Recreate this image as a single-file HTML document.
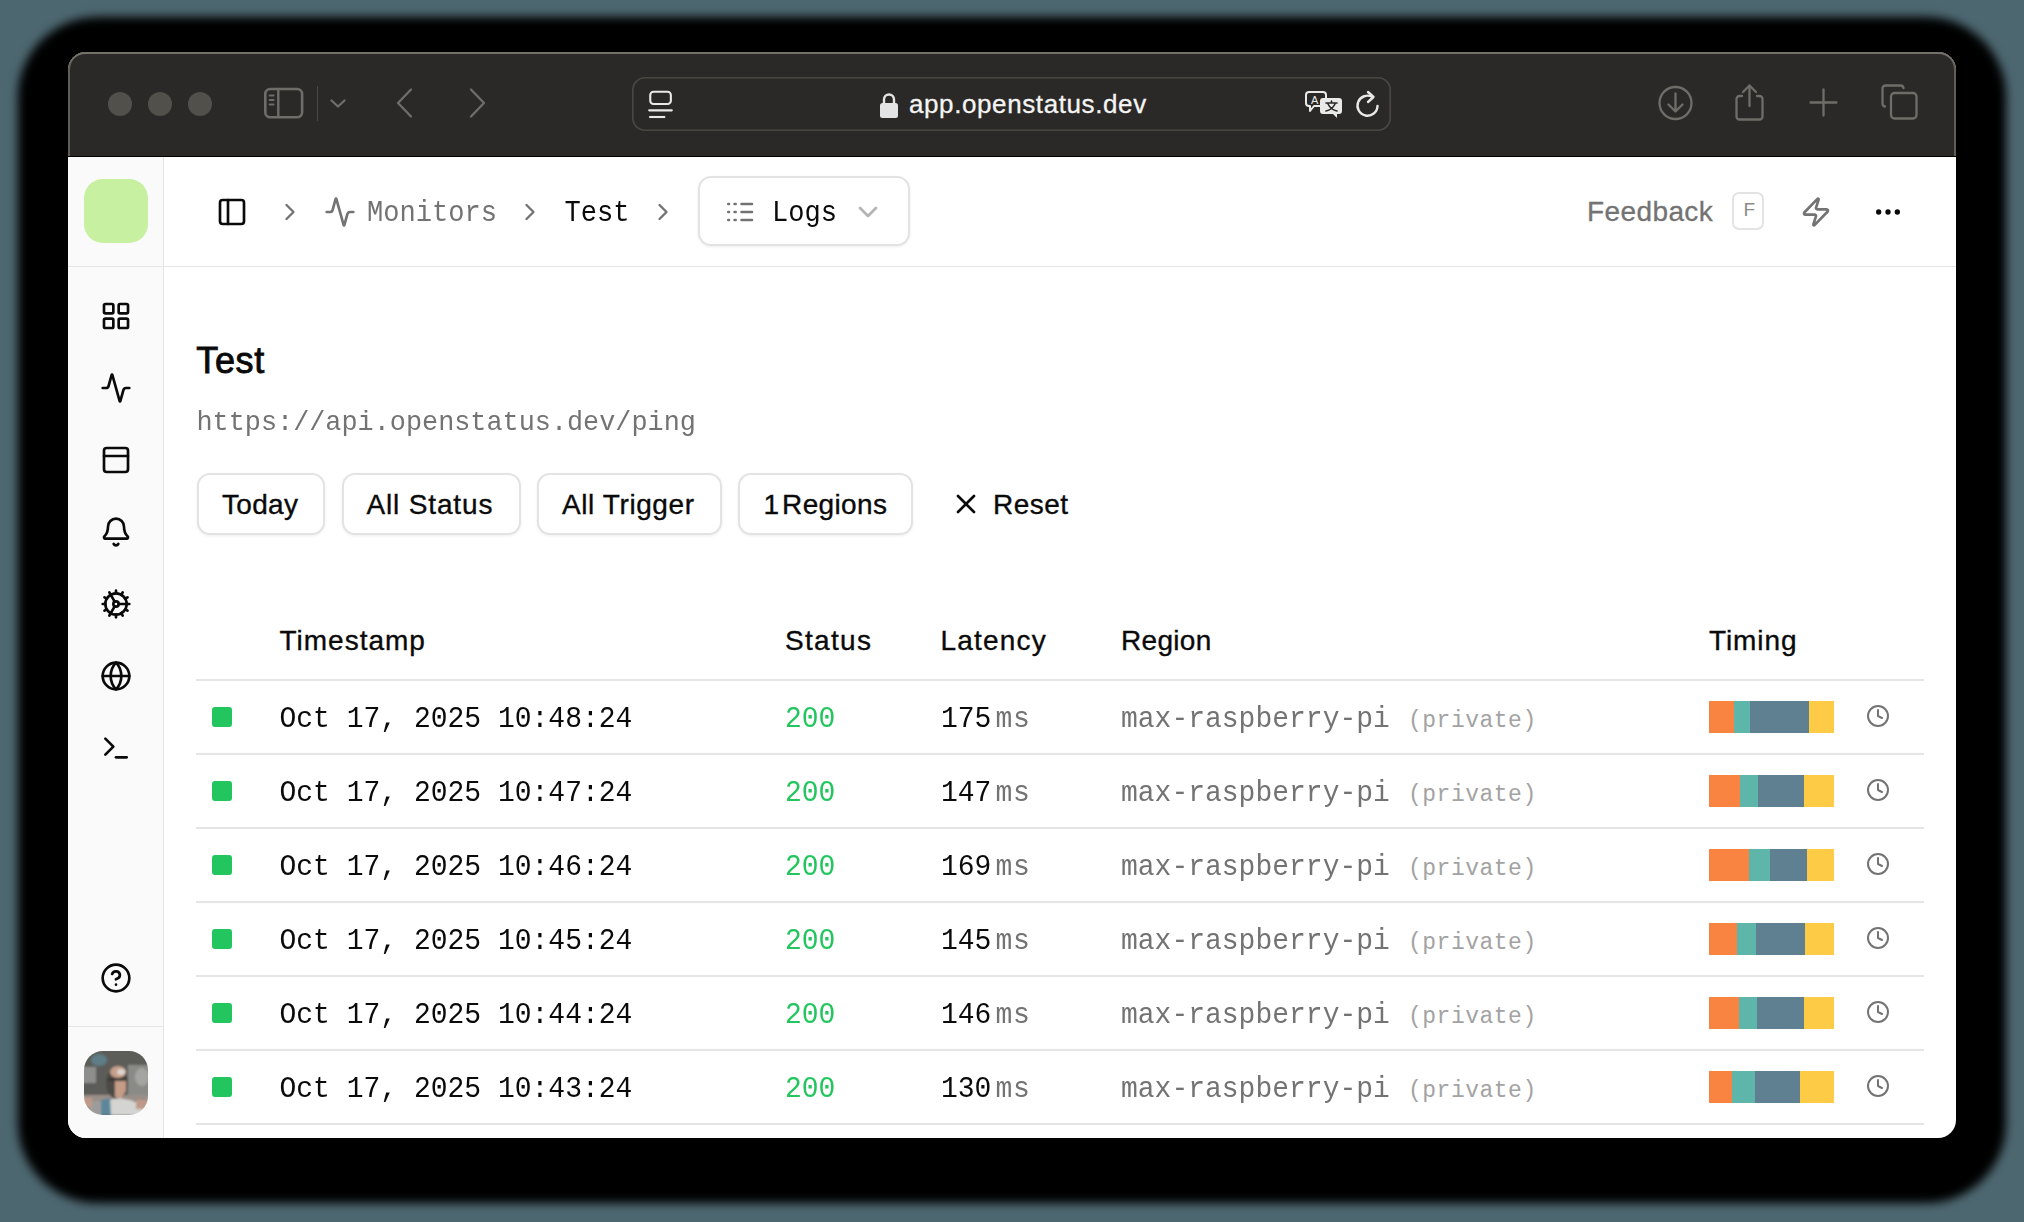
<!DOCTYPE html>
<html><head><meta charset="utf-8"><style>
html,body{margin:0;padding:0;}
body{width:2024px;height:1222px;position:relative;overflow:hidden;background:#4d6770;}
.b{position:absolute;box-sizing:border-box;}
.t{position:absolute;line-height:0;white-space:pre;}
</style></head><body>
<div class="b" style="left:68px;top:52px;width:1888px;height:1086px;border-radius:32px;background:#000;box-shadow:0 15px 10px 50px #000;"></div>
<div class="b" style="left:68px;top:52px;width:1888px;height:1086px;border-radius:18px;overflow:hidden;background:#fff;">
</div>
<div class="b" style="left:68px;top:52px;width:1888px;height:105px;background:#2b2927;border-radius:18px 18px 0 0;box-shadow:inset 0 2px 0 0 #74716b, inset 2px 0 0 0 #5f5d57, inset -2px 0 0 0 #5f5d57;"></div>
<div class="b" style="left:68px;top:156px;width:1888px;height:1px;background:#000;"></div>
<div class="b" style="left:108px;top:92px;width:24px;height:24px;border-radius:50%;background:#52504b;"></div>
<div class="b" style="left:148px;top:92px;width:24px;height:24px;border-radius:50%;background:#52504b;"></div>
<div class="b" style="left:188px;top:92px;width:24px;height:24px;border-radius:50%;background:#52504b;"></div>
<svg class="b" style="left:262px;top:86px;" width="44" height="34" viewBox="0 0 44 34" fill="none" stroke-linecap="round" stroke-linejoin="round"><rect x="3.3" y="3.0" width="36.8" height="28.2" rx="5" stroke="#6f6d68" stroke-width="2.6"/><line x1="16.3" y1="3" x2="16.3" y2="31" stroke="#6f6d68" stroke-width="2.4"/><line x1="7.8" y1="9.5" x2="11.5" y2="9.5" stroke="#6f6d68" stroke-width="2.2"/><line x1="7.8" y1="14" x2="11.5" y2="14" stroke="#6f6d68" stroke-width="2.2"/><line x1="7.8" y1="18.5" x2="11.5" y2="18.5" stroke="#6f6d68" stroke-width="2.2"/></svg>
<div class="b" style="left:317px;top:86px;width:1px;height:35px;background:#4a4844;"></div>
<svg class="b" style="left:328px;top:96px;" width="20" height="14" viewBox="0 0 20 14" fill="none" stroke-linecap="round" stroke-linejoin="round"><path d="M3.5 4.5 L10 10.5 L16.5 4.5" stroke="#6f6d68" stroke-width="2.3"/></svg>
<svg class="b" style="left:393px;top:86px;" width="24" height="34" viewBox="0 0 24 34" fill="none" stroke-linecap="round" stroke-linejoin="round"><path d="M18 3.5 L5 17 L18 30.5" stroke="#6f6d68" stroke-width="2.3"/></svg>
<svg class="b" style="left:465px;top:86px;" width="24" height="34" viewBox="0 0 24 34" fill="none" stroke-linecap="round" stroke-linejoin="round"><path d="M6 3.5 L19 17 L6 30.5" stroke="#6f6d68" stroke-width="2.3"/></svg>
<div class="b" style="left:632px;top:77px;width:759px;height:54px;border-radius:13px;box-shadow:inset 0 0 0 1.6px #4a4743;"></div>
<svg class="b" style="left:646px;top:88px;" width="30" height="34" viewBox="0 0 30 34" fill="none" stroke-linecap="round" stroke-linejoin="round"><rect x="4.25" y="3.75" width="20.6" height="12.2" rx="3.3" stroke="#e9e9e9" stroke-width="2.1"/><line x1="3.2" y1="22.35" x2="25.8" y2="22.35" stroke="#e9e9e9" stroke-width="2.1" stroke-linecap="round"/><line x1="3.2" y1="29" x2="19.2" y2="29" stroke="#e9e9e9" stroke-width="2.1" stroke-linecap="butt"/></svg>
<svg class="b" style="left:876px;top:90px;" width="26" height="30" viewBox="0 0 26 30" fill="none" stroke-linecap="round" stroke-linejoin="round"><path d="M8 14 V9.5 A5 5 0 0 1 18 9.5 V14" stroke="#e4e4e4" stroke-width="2.4"/><rect x="4" y="13" width="18" height="15" rx="2.5" fill="#e4e4e4"/></svg>
<div class="t" style="left:909px;top:103.99px;font-family:'Liberation Sans', sans-serif;font-size:26px;color:#f4f4f4;font-weight:400;letter-spacing:0.6px;-webkit-text-stroke:0.3px #f4f4f4;">app.openstatus.dev</div>
<svg class="b" style="left:1302px;top:88px;" width="44" height="34" viewBox="0 0 44 34" fill="none" stroke-linecap="round" stroke-linejoin="round"><path d="M7 4 H21 A3 3 0 0 1 24 7 V15 A3 3 0 0 1 21 18 H12 L8 23 V18 H7 A3 3 0 0 1 4 15 V7 A3 3 0 0 1 7 4 Z" stroke="#e9e9e9" stroke-width="2"/><text x="9" y="15.5" font-family="Liberation Sans" font-size="11" fill="#e9e9e9">A</text><path d="M21 10 H37 A3 3 0 0 1 40 13 V23 A3 3 0 0 1 37 26 H35 V30 L31 26 H21 A3 3 0 0 1 18 23 V13 A3 3 0 0 1 21 10 Z" fill="#e9e9e9"/><path d="M24 15 H35 M29.5 13 V15 M26 16 Q29 22 35 23 M33 16 Q30 22 24 23" stroke="#2b2927" stroke-width="1.6"/></svg>
<svg class="b" style="left:1353px;top:88px;" width="28" height="32" viewBox="0 0 28 32" fill="none" stroke-linecap="round" stroke-linejoin="round"><path d="M19.5 9 A10 10 0 1 0 24.5 18" stroke="#e9e9e9" stroke-width="2.4"/><path d="M15 4 L20.5 9 L15 14" stroke="#e9e9e9" stroke-width="2.4"/></svg>
<svg class="b" style="left:1656px;top:83px;" width="40" height="40" viewBox="0 0 40 40" fill="none" stroke-linecap="round" stroke-linejoin="round"><circle cx="19.5" cy="20" r="16" stroke="#6f6d68" stroke-width="2.3"/><path d="M19.5 10.5 V28 M12.5 21.5 L19.5 28.5 L26.5 21.5" stroke="#6f6d68" stroke-width="2.3"/></svg>
<svg class="b" style="left:1733px;top:82px;" width="36" height="42" viewBox="0 0 36 42" fill="none" stroke-linecap="round" stroke-linejoin="round"><path d="M9 14 H6.5 A3 3 0 0 0 3.5 17 V34.5 A3 3 0 0 0 6.5 37.5 H26.5 A3 3 0 0 0 29.5 34.5 V17 A3 3 0 0 0 26.5 14 H24" stroke="#6f6d68" stroke-width="2.3"/><path d="M16.5 24 V3.5 M10 10 L16.5 3.5 L23 10" stroke="#6f6d68" stroke-width="2.3"/></svg>
<svg class="b" style="left:1808px;top:87px;" width="32" height="32" viewBox="0 0 32 32" fill="none" stroke-linecap="round" stroke-linejoin="round"><path d="M15.5 2.5 V28.5 M2.5 15.5 H28.5" stroke="#6f6d68" stroke-width="2.3"/></svg>
<svg class="b" style="left:1880px;top:83px;" width="40" height="40" viewBox="0 0 40 40" fill="none" stroke-linecap="round" stroke-linejoin="round"><path d="M5 23.5 A3 3 0 0 1 2.5 20.5 V5.5 A3 3 0 0 1 5.5 2.5 H20.5 A3 3 0 0 1 23.5 5" stroke="#6f6d68" stroke-width="2.3"/><rect x="11" y="10" width="25.5" height="25.5" rx="3.5" stroke="#6f6d68" stroke-width="2.3"/></svg>
<div class="b" style="left:68px;top:157px;width:95px;height:981px;background:#fafafa;border-radius:0 0 0 18px;"></div>
<div class="b" style="left:163px;top:157px;width:1px;height:981px;background:#e5e5e5;"></div>
<div class="b" style="left:68px;top:266px;width:1888px;height:1px;background:#e5e5e5;"></div>
<div class="b" style="left:68px;top:1026px;width:95px;height:1px;background:#e5e5e5;"></div>
<div class="b" style="left:84px;top:179px;width:64px;height:64px;border-radius:19px;background:#c7f1a0;"></div>
<svg class="b" style="left:100.0px;top:299.5px" width="32" height="32" viewBox="0 0 24 24" fill="none" stroke="#0a0a0a" stroke-width="2" stroke-linecap="round" stroke-linejoin="round"><rect width="7" height="7" x="3" y="3" rx="1"/><rect width="7" height="7" x="14" y="3" rx="1"/><rect width="7" height="7" x="14" y="14" rx="1"/><rect width="7" height="7" x="3" y="14" rx="1"/></svg>
<svg class="b" style="left:100.0px;top:371.7px" width="32" height="32" viewBox="0 0 24 24" fill="none" stroke="#0a0a0a" stroke-width="2" stroke-linecap="round" stroke-linejoin="round"><path d="M22 12h-2.48a2 2 0 0 0-1.93 1.46l-2.35 8.36a.25.25 0 0 1-.48 0L9.24 2.18a.25.25 0 0 0-.48 0l-2.35 8.36A2 2 0 0 1 4.49 12H2"/></svg>
<svg class="b" style="left:100.0px;top:443.7px" width="32" height="32" viewBox="0 0 24 24" fill="none" stroke="#0a0a0a" stroke-width="2" stroke-linecap="round" stroke-linejoin="round"><rect width="18" height="18" x="3" y="3" rx="2"/><path d="M3 9h18"/></svg>
<svg class="b" style="left:100.0px;top:515.5px" width="32" height="32" viewBox="0 0 24 24" fill="none" stroke="#0a0a0a" stroke-width="2" stroke-linecap="round" stroke-linejoin="round"><path d="M10.268 21a2 2 0 0 0 3.464 0"/><path d="M3.262 15.326A1 1 0 0 0 4 17h16a1 1 0 0 0 .74-1.673C19.41 13.956 18 12.499 18 8A6 6 0 0 0 6 8c0 4.499-1.411 5.956-2.738 7.326"/></svg>
<svg class="b" style="left:100.0px;top:588.3px" width="32" height="32" viewBox="0 0 24 24" fill="none" stroke="#0a0a0a" stroke-width="2" stroke-linecap="round" stroke-linejoin="round"><path d="M12 20a8 8 0 1 0 0-16 8 8 0 0 0 0 16Z"/><path d="M12 14a2 2 0 1 0 0-4 2 2 0 0 0 0 4Z"/><path d="M12 2v2"/><path d="M12 22v-2"/><path d="m17 20.66-1-1.73"/><path d="M11 10.27 7 3.34"/><path d="m20.66 17-1.730-1"/><path d="m3.34 7 1.73 1"/><path d="M14 12h8"/><path d="M2 12h2"/><path d="m20.66 7-1.73 1"/><path d="m3.34 17 1.73-1"/><path d="m17 3.34-1 1.73"/><path d="m11 13.73-4 6.93"/></svg>
<svg class="b" style="left:100.0px;top:660.0px" width="32" height="32" viewBox="0 0 24 24" fill="none" stroke="#0a0a0a" stroke-width="2" stroke-linecap="round" stroke-linejoin="round"><circle cx="12" cy="12" r="10"/><path d="M12 2a14.5 14.5 0 0 0 0 20 14.5 14.5 0 0 0 0-20"/><path d="M2 12h20"/></svg>
<svg class="b" style="left:100.0px;top:732.0px" width="32" height="32" viewBox="0 0 24 24" fill="none" stroke="#0a0a0a" stroke-width="2" stroke-linecap="round" stroke-linejoin="round"><polyline points="4 17 10 11 4 5"/><line x1="12" x2="20" y1="19" y2="19"/></svg>
<svg class="b" style="left:100.0px;top:962.0px" width="32" height="32" viewBox="0 0 24 24" fill="none" stroke="#0a0a0a" stroke-width="2" stroke-linecap="round" stroke-linejoin="round"><circle cx="12" cy="12" r="10"/><path d="M9.09 9a3 3 0 0 1 5.83 1c0 2-3 3-3 3"/><path d="M12 17h.01"/></svg>
<svg class="b" style="left:84px;top:1051px" width="64" height="64" viewBox="0 0 64 64"><defs><clipPath id="avc"><rect width="64" height="64" rx="19"/></clipPath><filter id="avb" x="-10%" y="-10%" width="120%" height="120%"><feGaussianBlur stdDeviation="1.1"/></filter></defs><g clip-path="url(#avc)"><g filter="url(#avb)"><rect x="-4" y="-4" width="72" height="72" fill="#5b5d58"/><rect x="44" y="14" width="22" height="32" fill="#8a8b87"/><ellipse cx="58" cy="26" rx="7" ry="9" fill="#a4a5a2"/><ellipse cx="15" cy="9" rx="8" ry="6" fill="#5f8c9a" opacity="0.7"/><rect x="-2" y="16" width="14" height="16" fill="#8e8f8c"/><rect x="-2" y="44" width="68" height="6" fill="#9a8f88"/><ellipse cx="33" cy="32" rx="11" ry="16" fill="#4d4946"/><ellipse cx="34" cy="21" rx="8" ry="6" fill="#c79f8b"/><path d="M31 28 L42 27 L42 40 L37 48 L31 46 Z" fill="#c49c88"/><rect x="24" y="27" width="18" height="3" fill="#3a3836"/><ellipse cx="37" cy="21" rx="4" ry="3" fill="#ddd5d0"/><path d="M20 64 L24 50 Q32 46 40 48 Q54 50 60 56 L62 64 Z" fill="#d4d4d2"/><path d="M17 49 L26 47 L27 64 L17 64 Z" fill="#5b879a"/><rect x="4" y="50" width="13" height="16" fill="#9c9c9a"/><rect x="52" y="49" width="12" height="9" fill="#c09a88"/><rect x="0" y="47" width="8" height="9" fill="#c09a88"/></g></g></svg>
<svg class="b" style="left:216.0px;top:195.7px" width="32" height="32" viewBox="0 0 24 24" fill="none" stroke="#0a0a0a" stroke-width="2" stroke-linecap="round" stroke-linejoin="round"><rect width="18" height="18" x="3" y="3" rx="2"/><path d="M9 3v18"/></svg>
<svg class="b" style="left:276.0px;top:198.0px" width="28" height="28" viewBox="0 0 24 24" fill="none" stroke="#737373" stroke-width="2" stroke-linecap="round" stroke-linejoin="round"><path d="m9 18 6-6-6-6"/></svg>
<svg class="b" style="left:324.0px;top:195.75px" width="32" height="32" viewBox="0 0 24 24" fill="none" stroke="#737373" stroke-width="2" stroke-linecap="round" stroke-linejoin="round"><path d="M22 12h-2.48a2 2 0 0 0-1.93 1.46l-2.35 8.36a.25.25 0 0 1-.48 0L9.24 2.18a.25.25 0 0 0-.48 0l-2.35 8.36A2 2 0 0 1 4.49 12H2"/></svg>
<div class="t" style="left:367px;top:213.78px;font-family:'Liberation Mono', monospace;font-size:27.1px;color:#737373;font-weight:400;letter-spacing:0px;transform:scaleY(1.1);transform-origin:0 7.22px;">Monitors</div>
<svg class="b" style="left:516.0px;top:198.0px" width="28" height="28" viewBox="0 0 24 24" fill="none" stroke="#737373" stroke-width="2" stroke-linecap="round" stroke-linejoin="round"><path d="m9 18 6-6-6-6"/></svg>
<div class="t" style="left:564.5px;top:213.78px;font-family:'Liberation Mono', monospace;font-size:27.1px;color:#0a0a0a;font-weight:400;letter-spacing:0px;transform:scaleY(1.1);transform-origin:0 7.22px;">Test</div>
<svg class="b" style="left:649.0px;top:198.0px" width="28" height="28" viewBox="0 0 24 24" fill="none" stroke="#737373" stroke-width="2" stroke-linecap="round" stroke-linejoin="round"><path d="m9 18 6-6-6-6"/></svg>
<div class="b" style="left:697.5px;top:175.5px;width:212px;height:70px;border:2px solid #e3e3e3;border-radius:13px;box-shadow:0 1px 3px rgba(0,0,0,0.07);background:#fff;"></div>
<svg class="b" style="left:720px;top:196px" width="40" height="32" viewBox="0 0 40 32" fill="none" stroke="#737373" stroke-width="2.5" stroke-linecap="round"><path d="M8.2 8h.8M14.5 8h1.2M21.5 8H32M8.2 16h.8M14.5 16h1.2M21.5 16H32M8.2 24h.8M14.5 24h1.2M21.5 24H32"/></svg>
<div class="t" style="left:772px;top:213.78px;font-family:'Liberation Mono', monospace;font-size:27.1px;color:#0a0a0a;font-weight:400;letter-spacing:0px;transform:scaleY(1.1);transform-origin:0 7.22px;">Logs</div>
<svg class="b" style="left:851.5px;top:196.0px" width="32" height="32" viewBox="0 0 24 24" fill="none" stroke="#b3b3b3" stroke-width="2" stroke-linecap="round" stroke-linejoin="round"><path d="m6 9 6 6 6-6"/></svg>
<div class="t" style="left:1587px;top:211.70px;font-family:'Liberation Sans', sans-serif;font-size:28px;color:#737373;font-weight:400;letter-spacing:0.4px;-webkit-text-stroke:0.3px #737373;">Feedback</div>
<div class="b" style="left:1732px;top:191.5px;width:31.5px;height:38.5px;border:2px solid #e3e3e3;border-radius:7px;"></div>
<div class="t" style="left:1743.5px;top:210.42px;font-family:'Liberation Sans', sans-serif;font-size:19px;color:#8a8a8a;font-weight:400;letter-spacing:0px;">F</div>
<svg class="b" style="left:1800.0px;top:195.75px" width="32" height="32" viewBox="0 0 24 24" fill="none" stroke="#737373" stroke-width="2" stroke-linecap="round" stroke-linejoin="round"><path d="M4 14a1 1 0 0 1-.78-1.63l9.9-10.2a.5.5 0 0 1 .86.46l-1.920 6.02A1 1 0 0 0 13 10h7a1 1 0 0 1 .78 1.63l-9.9 10.2a.5.5 0 0 1-.86-.46l1.92-6.02A1 1 0 0 0 11 14z"/></svg>
<svg class="b" style="left:1872.0px;top:195.6px" width="32" height="32" viewBox="0 0 24 24" fill="none" stroke="#0a0a0a" stroke-width="2" stroke-linecap="round" stroke-linejoin="round"><circle cx="12" cy="12" r="1"/><circle cx="19" cy="12" r="1"/><circle cx="5" cy="12" r="1"/></svg>
<div class="t" style="left:196.2px;top:360.53px;font-family:'Liberation Sans', sans-serif;font-size:36px;color:#0a0a0a;font-weight:400;letter-spacing:0.7px;-webkit-text-stroke:0.85px #0a0a0a;">Test</div>
<div class="t" style="left:196.5px;top:422.84px;font-family:'Liberation Mono', monospace;font-size:26.85px;color:#737373;font-weight:400;letter-spacing:0px;transform:scaleY(1.05);transform-origin:0 7.16px;">https://api.openstatus.dev/ping</div>
<div class="b" style="left:196.5px;top:472.5px;width:128.0px;height:62.5px;border:2px solid #e3e3e3;border-radius:13px;box-shadow:0 1px 3px rgba(0,0,0,0.07);background:#fff;"></div>
<div class="t" style="left:222px;top:504.80px;font-family:'Liberation Sans', sans-serif;font-size:28px;color:#0a0a0a;font-weight:400;letter-spacing:0.3px;-webkit-text-stroke:0.35px #0a0a0a;">Today</div>
<div class="b" style="left:341.5px;top:472.5px;width:179.0px;height:62.5px;border:2px solid #e3e3e3;border-radius:13px;box-shadow:0 1px 3px rgba(0,0,0,0.07);background:#fff;"></div>
<div class="t" style="left:366.5px;top:504.80px;font-family:'Liberation Sans', sans-serif;font-size:28px;color:#0a0a0a;font-weight:400;letter-spacing:0.85px;-webkit-text-stroke:0.35px #0a0a0a;">All Status</div>
<div class="b" style="left:537px;top:472.5px;width:185px;height:62.5px;border:2px solid #e3e3e3;border-radius:13px;box-shadow:0 1px 3px rgba(0,0,0,0.07);background:#fff;"></div>
<div class="t" style="left:562px;top:504.80px;font-family:'Liberation Sans', sans-serif;font-size:28px;color:#0a0a0a;font-weight:400;letter-spacing:0.6px;-webkit-text-stroke:0.35px #0a0a0a;">All Trigger</div>
<div class="b" style="left:738px;top:472.5px;width:174.5px;height:62.5px;border:2px solid #e3e3e3;border-radius:13px;box-shadow:0 1px 3px rgba(0,0,0,0.07);background:#fff;"></div>
<div class="t" style="left:763.5px;top:504.80px;font-family:'Liberation Sans', sans-serif;font-size:28px;color:#0a0a0a;font-weight:400;letter-spacing:0.35px;-webkit-text-stroke:0.35px #0a0a0a;">1&#8202;Regions</div>
<svg class="b" style="left:949.7px;top:488.0px" width="32" height="32" viewBox="0 0 24 24" fill="none" stroke="#0a0a0a" stroke-width="2" stroke-linecap="round" stroke-linejoin="round"><path d="M18 6 6 18"/><path d="m6 6 12 12"/></svg>
<div class="t" style="left:993px;top:504.80px;font-family:'Liberation Sans', sans-serif;font-size:28px;color:#0a0a0a;font-weight:400;letter-spacing:0.45px;-webkit-text-stroke:0.35px #0a0a0a;">Reset</div>
<div class="t" style="left:279.5px;top:640.70px;font-family:'Liberation Sans', sans-serif;font-size:28px;color:#0a0a0a;font-weight:400;letter-spacing:1.0px;-webkit-text-stroke:0.35px #0a0a0a;">Timestamp</div>
<div class="t" style="left:785px;top:640.70px;font-family:'Liberation Sans', sans-serif;font-size:28px;color:#0a0a0a;font-weight:400;letter-spacing:1.3px;-webkit-text-stroke:0.35px #0a0a0a;">Status</div>
<div class="t" style="left:940.5px;top:640.70px;font-family:'Liberation Sans', sans-serif;font-size:28px;color:#0a0a0a;font-weight:400;letter-spacing:1.2px;-webkit-text-stroke:0.35px #0a0a0a;">Latency</div>
<div class="t" style="left:1121px;top:640.70px;font-family:'Liberation Sans', sans-serif;font-size:28px;color:#0a0a0a;font-weight:400;letter-spacing:0.3px;-webkit-text-stroke:0.35px #0a0a0a;">Region</div>
<div class="t" style="left:1709px;top:640.70px;font-family:'Liberation Sans', sans-serif;font-size:28px;color:#0a0a0a;font-weight:400;letter-spacing:0.9px;-webkit-text-stroke:0.35px #0a0a0a;">Timing</div>
<div class="b" style="left:196px;top:679px;width:1728px;height:2px;background:#e5e5e5;"></div>
<div class="b" style="left:211.5px;top:707px;width:20.5px;height:20px;background:#22c55e;border-radius:3px;"></div>
<div class="t" style="left:279.5px;top:719.74px;font-family:'Liberation Mono', monospace;font-size:28px;color:#0a0a0a;font-weight:400;letter-spacing:0px;transform:scaleY(1.08);transform-origin:0 7.46px;">Oct 17, 2025 10:48:24</div>
<div class="t" style="left:785px;top:719.74px;font-family:'Liberation Mono', monospace;font-size:28px;color:#22c55e;font-weight:400;letter-spacing:0px;transform:scaleY(1.08);transform-origin:0 7.46px;">200</div>
<div class="t" style="left:941px;top:719.74px;font-family:'Liberation Mono', monospace;font-size:28px;color:#0a0a0a;font-weight:400;letter-spacing:0px;transform:scaleY(1.08);transform-origin:0 7.46px;">175</div>
<div class="t" style="left:995.5px;top:719.74px;font-family:'Liberation Mono', monospace;font-size:28px;color:#737373;font-weight:400;letter-spacing:0.6px;transform:scaleY(1.08);transform-origin:0 7.46px;">ms</div>
<div class="t" style="left:1121px;top:719.74px;font-family:'Liberation Mono', monospace;font-size:28px;color:#737373;font-weight:400;letter-spacing:0px;transform:scaleY(1.05);transform-origin:0 7.46px;">max-raspberry-pi</div>
<div class="t" style="left:1408px;top:720.87px;font-family:'Liberation Mono', monospace;font-size:23px;color:#a3a3a3;font-weight:400;letter-spacing:0.5px;">(private)</div>
<div class="b" style="left:1709px;top:701px;width:25px;height:32px;background:#f98441;"></div>
<div class="b" style="left:1734px;top:701px;width:16px;height:32px;background:#5eb5aa;"></div>
<div class="b" style="left:1750px;top:701px;width:59px;height:32px;background:#5e8090;"></div>
<div class="b" style="left:1809px;top:701px;width:25px;height:32px;background:#fdcb45;"></div>
<svg class="b" style="left:1866.0px;top:704.0px" width="24" height="24" viewBox="0 0 24 24" fill="none" stroke="#737373" stroke-width="2" stroke-linecap="round" stroke-linejoin="round"><circle cx="12" cy="12" r="10"/><polyline points="12 6 12 12 16 14"/></svg>
<div class="b" style="left:196px;top:753px;width:1728px;height:2px;background:#e5e5e5;"></div>
<div class="b" style="left:211.5px;top:781px;width:20.5px;height:20px;background:#22c55e;border-radius:3px;"></div>
<div class="t" style="left:279.5px;top:793.74px;font-family:'Liberation Mono', monospace;font-size:28px;color:#0a0a0a;font-weight:400;letter-spacing:0px;transform:scaleY(1.08);transform-origin:0 7.46px;">Oct 17, 2025 10:47:24</div>
<div class="t" style="left:785px;top:793.74px;font-family:'Liberation Mono', monospace;font-size:28px;color:#22c55e;font-weight:400;letter-spacing:0px;transform:scaleY(1.08);transform-origin:0 7.46px;">200</div>
<div class="t" style="left:941px;top:793.74px;font-family:'Liberation Mono', monospace;font-size:28px;color:#0a0a0a;font-weight:400;letter-spacing:0px;transform:scaleY(1.08);transform-origin:0 7.46px;">147</div>
<div class="t" style="left:995.5px;top:793.74px;font-family:'Liberation Mono', monospace;font-size:28px;color:#737373;font-weight:400;letter-spacing:0.6px;transform:scaleY(1.08);transform-origin:0 7.46px;">ms</div>
<div class="t" style="left:1121px;top:793.74px;font-family:'Liberation Mono', monospace;font-size:28px;color:#737373;font-weight:400;letter-spacing:0px;transform:scaleY(1.05);transform-origin:0 7.46px;">max-raspberry-pi</div>
<div class="t" style="left:1408px;top:794.87px;font-family:'Liberation Mono', monospace;font-size:23px;color:#a3a3a3;font-weight:400;letter-spacing:0.5px;">(private)</div>
<div class="b" style="left:1709px;top:775px;width:31px;height:32px;background:#f98441;"></div>
<div class="b" style="left:1740px;top:775px;width:18px;height:32px;background:#5eb5aa;"></div>
<div class="b" style="left:1758px;top:775px;width:46px;height:32px;background:#5e8090;"></div>
<div class="b" style="left:1804px;top:775px;width:30px;height:32px;background:#fdcb45;"></div>
<svg class="b" style="left:1866.0px;top:778.0px" width="24" height="24" viewBox="0 0 24 24" fill="none" stroke="#737373" stroke-width="2" stroke-linecap="round" stroke-linejoin="round"><circle cx="12" cy="12" r="10"/><polyline points="12 6 12 12 16 14"/></svg>
<div class="b" style="left:196px;top:827px;width:1728px;height:2px;background:#e5e5e5;"></div>
<div class="b" style="left:211.5px;top:855px;width:20.5px;height:20px;background:#22c55e;border-radius:3px;"></div>
<div class="t" style="left:279.5px;top:867.74px;font-family:'Liberation Mono', monospace;font-size:28px;color:#0a0a0a;font-weight:400;letter-spacing:0px;transform:scaleY(1.08);transform-origin:0 7.46px;">Oct 17, 2025 10:46:24</div>
<div class="t" style="left:785px;top:867.74px;font-family:'Liberation Mono', monospace;font-size:28px;color:#22c55e;font-weight:400;letter-spacing:0px;transform:scaleY(1.08);transform-origin:0 7.46px;">200</div>
<div class="t" style="left:941px;top:867.74px;font-family:'Liberation Mono', monospace;font-size:28px;color:#0a0a0a;font-weight:400;letter-spacing:0px;transform:scaleY(1.08);transform-origin:0 7.46px;">169</div>
<div class="t" style="left:995.5px;top:867.74px;font-family:'Liberation Mono', monospace;font-size:28px;color:#737373;font-weight:400;letter-spacing:0.6px;transform:scaleY(1.08);transform-origin:0 7.46px;">ms</div>
<div class="t" style="left:1121px;top:867.74px;font-family:'Liberation Mono', monospace;font-size:28px;color:#737373;font-weight:400;letter-spacing:0px;transform:scaleY(1.05);transform-origin:0 7.46px;">max-raspberry-pi</div>
<div class="t" style="left:1408px;top:868.87px;font-family:'Liberation Mono', monospace;font-size:23px;color:#a3a3a3;font-weight:400;letter-spacing:0.5px;">(private)</div>
<div class="b" style="left:1709px;top:849px;width:40px;height:32px;background:#f98441;"></div>
<div class="b" style="left:1749px;top:849px;width:21px;height:32px;background:#5eb5aa;"></div>
<div class="b" style="left:1770px;top:849px;width:37px;height:32px;background:#5e8090;"></div>
<div class="b" style="left:1807px;top:849px;width:27px;height:32px;background:#fdcb45;"></div>
<svg class="b" style="left:1866.0px;top:852.0px" width="24" height="24" viewBox="0 0 24 24" fill="none" stroke="#737373" stroke-width="2" stroke-linecap="round" stroke-linejoin="round"><circle cx="12" cy="12" r="10"/><polyline points="12 6 12 12 16 14"/></svg>
<div class="b" style="left:196px;top:901px;width:1728px;height:2px;background:#e5e5e5;"></div>
<div class="b" style="left:211.5px;top:929px;width:20.5px;height:20px;background:#22c55e;border-radius:3px;"></div>
<div class="t" style="left:279.5px;top:941.74px;font-family:'Liberation Mono', monospace;font-size:28px;color:#0a0a0a;font-weight:400;letter-spacing:0px;transform:scaleY(1.08);transform-origin:0 7.46px;">Oct 17, 2025 10:45:24</div>
<div class="t" style="left:785px;top:941.74px;font-family:'Liberation Mono', monospace;font-size:28px;color:#22c55e;font-weight:400;letter-spacing:0px;transform:scaleY(1.08);transform-origin:0 7.46px;">200</div>
<div class="t" style="left:941px;top:941.74px;font-family:'Liberation Mono', monospace;font-size:28px;color:#0a0a0a;font-weight:400;letter-spacing:0px;transform:scaleY(1.08);transform-origin:0 7.46px;">145</div>
<div class="t" style="left:995.5px;top:941.74px;font-family:'Liberation Mono', monospace;font-size:28px;color:#737373;font-weight:400;letter-spacing:0.6px;transform:scaleY(1.08);transform-origin:0 7.46px;">ms</div>
<div class="t" style="left:1121px;top:941.74px;font-family:'Liberation Mono', monospace;font-size:28px;color:#737373;font-weight:400;letter-spacing:0px;transform:scaleY(1.05);transform-origin:0 7.46px;">max-raspberry-pi</div>
<div class="t" style="left:1408px;top:942.87px;font-family:'Liberation Mono', monospace;font-size:23px;color:#a3a3a3;font-weight:400;letter-spacing:0.5px;">(private)</div>
<div class="b" style="left:1709px;top:923px;width:28px;height:32px;background:#f98441;"></div>
<div class="b" style="left:1737px;top:923px;width:19px;height:32px;background:#5eb5aa;"></div>
<div class="b" style="left:1756px;top:923px;width:49px;height:32px;background:#5e8090;"></div>
<div class="b" style="left:1805px;top:923px;width:29px;height:32px;background:#fdcb45;"></div>
<svg class="b" style="left:1866.0px;top:926.0px" width="24" height="24" viewBox="0 0 24 24" fill="none" stroke="#737373" stroke-width="2" stroke-linecap="round" stroke-linejoin="round"><circle cx="12" cy="12" r="10"/><polyline points="12 6 12 12 16 14"/></svg>
<div class="b" style="left:196px;top:975px;width:1728px;height:2px;background:#e5e5e5;"></div>
<div class="b" style="left:211.5px;top:1003px;width:20.5px;height:20px;background:#22c55e;border-radius:3px;"></div>
<div class="t" style="left:279.5px;top:1015.74px;font-family:'Liberation Mono', monospace;font-size:28px;color:#0a0a0a;font-weight:400;letter-spacing:0px;transform:scaleY(1.08);transform-origin:0 7.46px;">Oct 17, 2025 10:44:24</div>
<div class="t" style="left:785px;top:1015.74px;font-family:'Liberation Mono', monospace;font-size:28px;color:#22c55e;font-weight:400;letter-spacing:0px;transform:scaleY(1.08);transform-origin:0 7.46px;">200</div>
<div class="t" style="left:941px;top:1015.74px;font-family:'Liberation Mono', monospace;font-size:28px;color:#0a0a0a;font-weight:400;letter-spacing:0px;transform:scaleY(1.08);transform-origin:0 7.46px;">146</div>
<div class="t" style="left:995.5px;top:1015.74px;font-family:'Liberation Mono', monospace;font-size:28px;color:#737373;font-weight:400;letter-spacing:0.6px;transform:scaleY(1.08);transform-origin:0 7.46px;">ms</div>
<div class="t" style="left:1121px;top:1015.74px;font-family:'Liberation Mono', monospace;font-size:28px;color:#737373;font-weight:400;letter-spacing:0px;transform:scaleY(1.05);transform-origin:0 7.46px;">max-raspberry-pi</div>
<div class="t" style="left:1408px;top:1016.87px;font-family:'Liberation Mono', monospace;font-size:23px;color:#a3a3a3;font-weight:400;letter-spacing:0.5px;">(private)</div>
<div class="b" style="left:1709px;top:997px;width:30px;height:32px;background:#f98441;"></div>
<div class="b" style="left:1739px;top:997px;width:18px;height:32px;background:#5eb5aa;"></div>
<div class="b" style="left:1757px;top:997px;width:47px;height:32px;background:#5e8090;"></div>
<div class="b" style="left:1804px;top:997px;width:30px;height:32px;background:#fdcb45;"></div>
<svg class="b" style="left:1866.0px;top:1000.0px" width="24" height="24" viewBox="0 0 24 24" fill="none" stroke="#737373" stroke-width="2" stroke-linecap="round" stroke-linejoin="round"><circle cx="12" cy="12" r="10"/><polyline points="12 6 12 12 16 14"/></svg>
<div class="b" style="left:196px;top:1049px;width:1728px;height:2px;background:#e5e5e5;"></div>
<div class="b" style="left:211.5px;top:1077px;width:20.5px;height:20px;background:#22c55e;border-radius:3px;"></div>
<div class="t" style="left:279.5px;top:1089.74px;font-family:'Liberation Mono', monospace;font-size:28px;color:#0a0a0a;font-weight:400;letter-spacing:0px;transform:scaleY(1.08);transform-origin:0 7.46px;">Oct 17, 2025 10:43:24</div>
<div class="t" style="left:785px;top:1089.74px;font-family:'Liberation Mono', monospace;font-size:28px;color:#22c55e;font-weight:400;letter-spacing:0px;transform:scaleY(1.08);transform-origin:0 7.46px;">200</div>
<div class="t" style="left:941px;top:1089.74px;font-family:'Liberation Mono', monospace;font-size:28px;color:#0a0a0a;font-weight:400;letter-spacing:0px;transform:scaleY(1.08);transform-origin:0 7.46px;">130</div>
<div class="t" style="left:995.5px;top:1089.74px;font-family:'Liberation Mono', monospace;font-size:28px;color:#737373;font-weight:400;letter-spacing:0.6px;transform:scaleY(1.08);transform-origin:0 7.46px;">ms</div>
<div class="t" style="left:1121px;top:1089.74px;font-family:'Liberation Mono', monospace;font-size:28px;color:#737373;font-weight:400;letter-spacing:0px;transform:scaleY(1.05);transform-origin:0 7.46px;">max-raspberry-pi</div>
<div class="t" style="left:1408px;top:1090.87px;font-family:'Liberation Mono', monospace;font-size:23px;color:#a3a3a3;font-weight:400;letter-spacing:0.5px;">(private)</div>
<div class="b" style="left:1709px;top:1071px;width:23px;height:32px;background:#f98441;"></div>
<div class="b" style="left:1732px;top:1071px;width:23px;height:32px;background:#5eb5aa;"></div>
<div class="b" style="left:1755px;top:1071px;width:45px;height:32px;background:#5e8090;"></div>
<div class="b" style="left:1800px;top:1071px;width:34px;height:32px;background:#fdcb45;"></div>
<svg class="b" style="left:1866.0px;top:1074.0px" width="24" height="24" viewBox="0 0 24 24" fill="none" stroke="#737373" stroke-width="2" stroke-linecap="round" stroke-linejoin="round"><circle cx="12" cy="12" r="10"/><polyline points="12 6 12 12 16 14"/></svg>
<div class="b" style="left:196px;top:1123px;width:1728px;height:2px;background:#e5e5e5;"></div>

</body></html>
